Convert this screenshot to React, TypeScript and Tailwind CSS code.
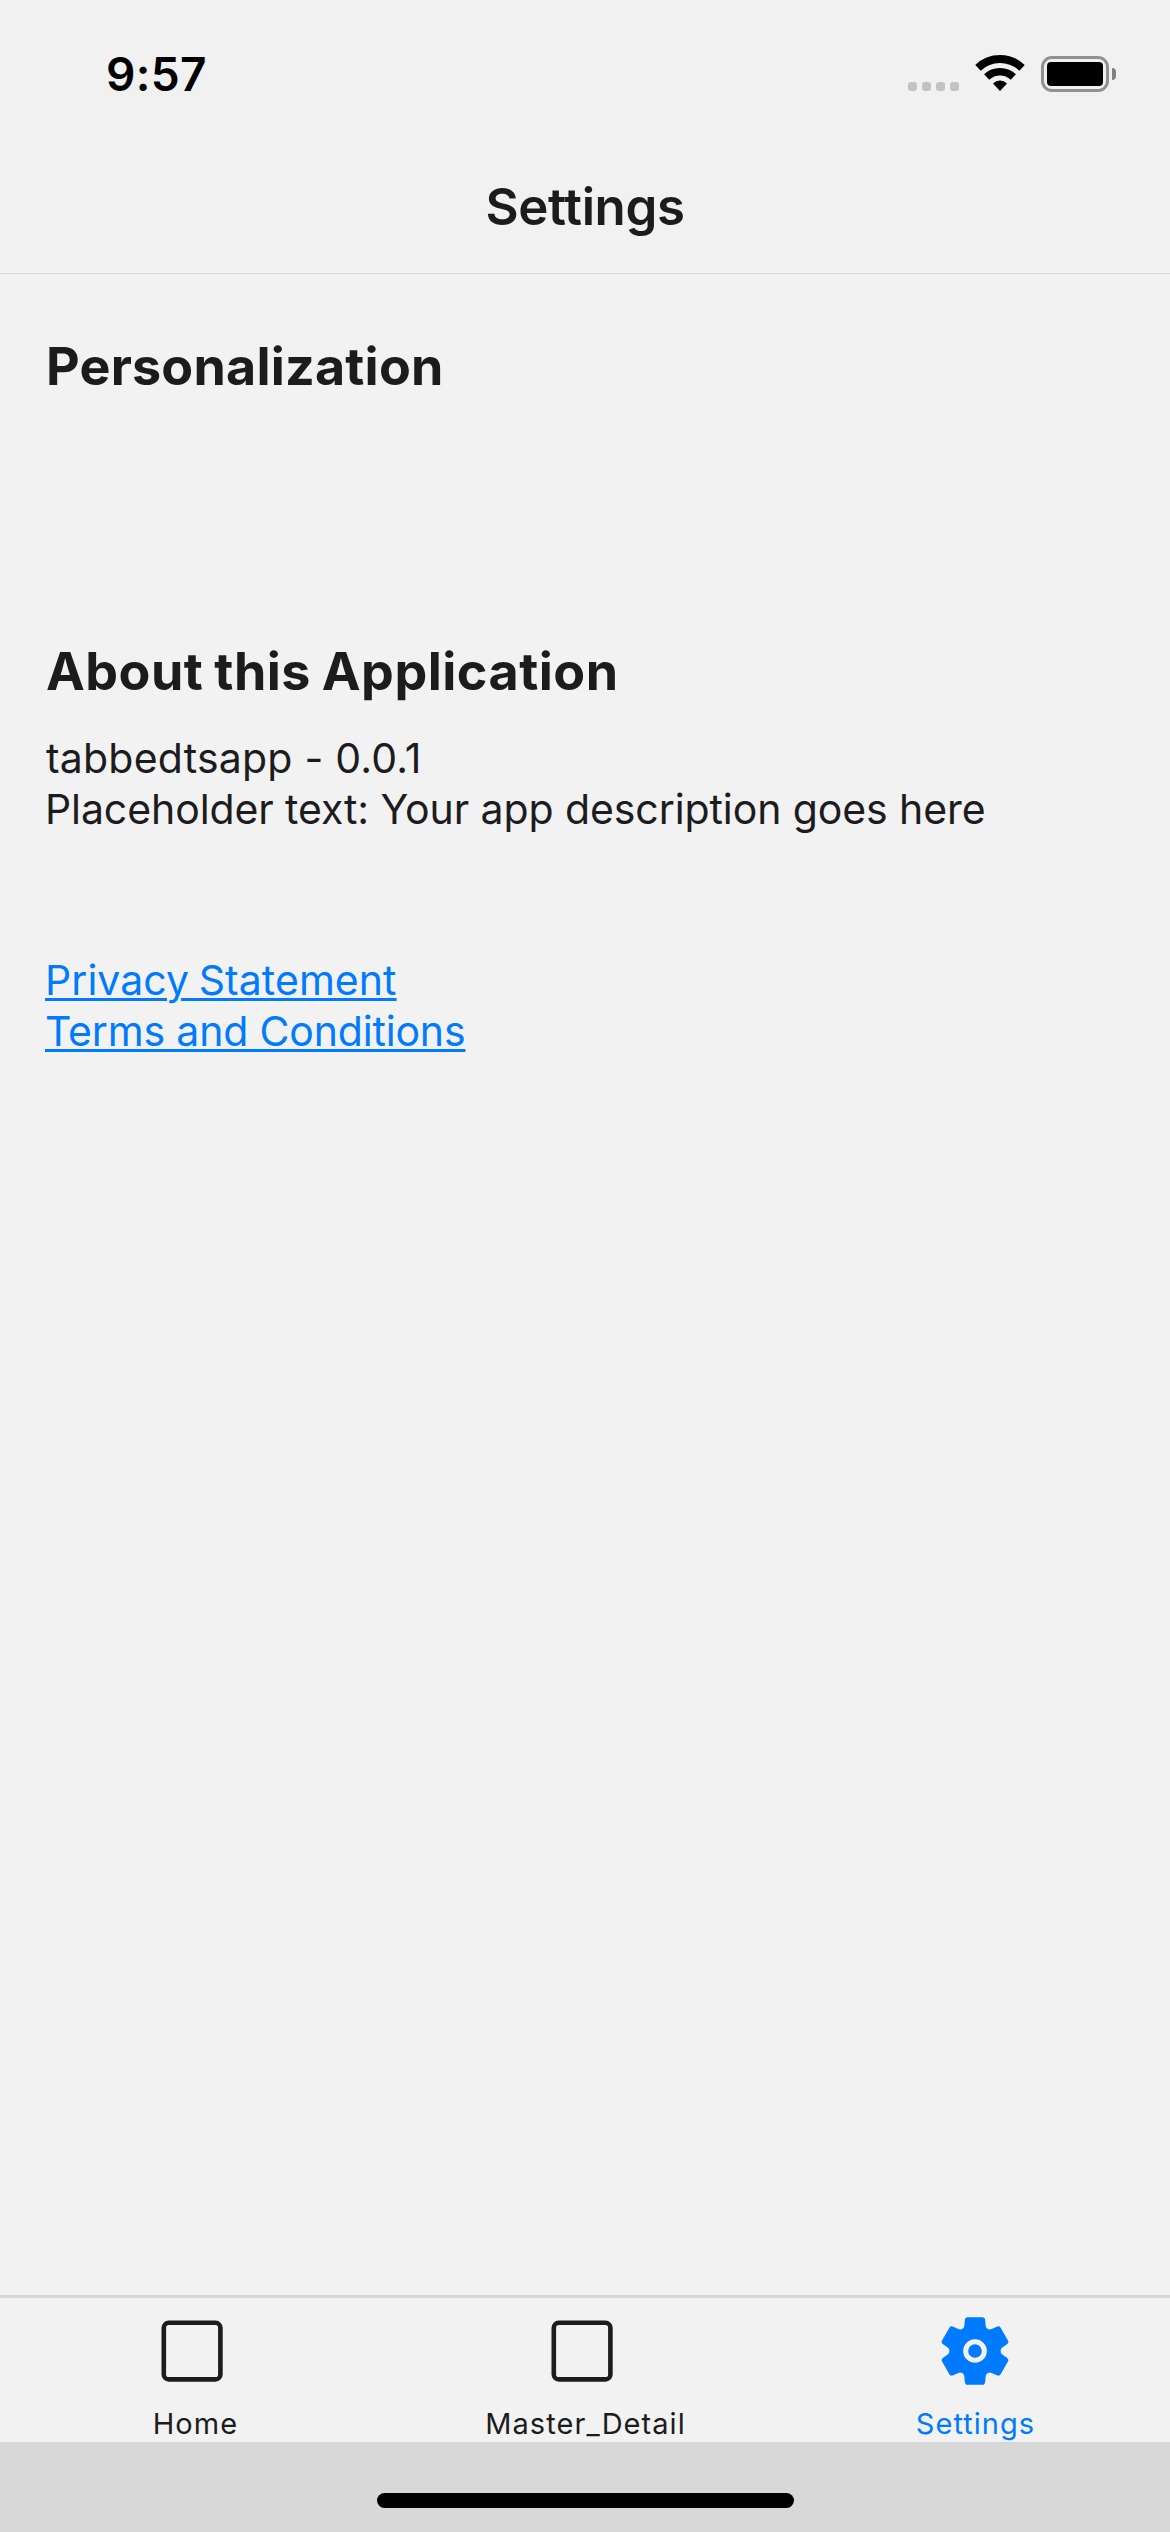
import type { ReactNode } from 'react';

function StatusBar() {
  return (
    <div className="flex h-[141px] items-start justify-between pr-[54px] pl-[106px] text-black">
      <span className="mt-[44px] text-[46px] leading-[60px] font-semibold tracking-[0.3px]">9:57</span>
      <div className="mt-[55px] flex items-start">
        <div className="mt-[27px] flex gap-[5px]">
          <i className="size-[9px] rounded-[3px] bg-[#c3c3c3]" />
          <i className="size-[9px] rounded-[3px] bg-[#c3c3c3]" />
          <i className="size-[9px] rounded-[3px] bg-[#c3c3c3]" />
          <i className="size-[9px] rounded-[3px] bg-[#c3c3c3]" />
        </div>
        <svg className="ml-[16px]" width="50" height="37" viewBox="-25 -36 50 37" fill="none" stroke="#000">
          <path d="M-22 -23.2A32 32 0 0 1 22 -23.2" strokeWidth="8" />
          <path d="M-13.3 -14A19.3 19.3 0 0 1 13.3 -14" strokeWidth="7.6" />
          <path d="M0 0L-7 -7.4Q-4 -10.4 0 -10.4T7 -7.4Z" fill="#000" stroke="none" />
        </svg>
        <div className="mt-px ml-[16px] flex items-center">
          <div className="h-[36px] w-[68px] rounded-[11px] border-3 border-[#919191] p-[3px]">
            <div className="h-full w-full rounded-[4px] bg-black" />
          </div>
          <div className="ml-[3px] h-[12px] w-[4px] rounded-r-full bg-[#808080]" />
        </div>
      </div>
    </div>
  );
}

function SquareIcon() {
  return (
    <svg width="68" height="68" viewBox="-34 -34 68 68" fill="none">
      <rect x="-28.2" y="-28.2" width="56.6" height="56.6" rx="5" stroke="#1c1c1e" strokeWidth="4.6" />
    </svg>
  );
}

const TOOTH =
  'M0 0L-38.2 -66.3Q-33 -69 -32 -76L-30.5 -93Q-29.5 -101.5 -22 -101.5H22Q29.5 -101.5 30.5 -93L32 -76Q33 -69 38.2 -66.3Z';

function GearIcon() {
  return (
    <svg width="68" height="68" viewBox="-102 -102 204 204">
      <g fill="#007aff">
        {[0, 60, 120, 180, 240, 300].map((angle) => (
          <path key={angle} d={TOOTH} transform={`rotate(${angle})`} />
        ))}
        <circle r="76" />
      </g>
      <circle r="28" fill="none" stroke="#f2f2f2" strokeWidth="15" />
    </svg>
  );
}

function Tab({ label, active, children }: { label: ReactNode; active?: boolean; children: ReactNode }) {
  return (
    <div className={active ? 'flex flex-1 flex-col items-center text-[#007aff]' : 'flex flex-1 flex-col items-center'}>
      <div className={active ? 'mt-[19px] h-[68px] pr-px' : 'mt-[19px] h-[68px] pr-[6px]'}>{children}</div>
      <span className="mt-[21px] pl-px text-[29px] leading-[36px] tracking-[1.05px]">{label}</span>
    </div>
  );
}

export default function App() {
  return (
    <div className="flex h-[2532px] w-[1170px] flex-col bg-[#f2f2f2] font-['Inter',sans-serif] text-[#1c1c1e]">
      <header className="h-[274px] border-b border-[#d8d8d8] bg-[#f1f1f1]">
        <StatusBar />
        <h1 className="mt-[36px] text-center text-[51px] leading-[60px] font-semibold tracking-[-0.4px]">Settings</h1>
      </header>

      <main className="flex flex-1 flex-col items-start px-[45px] pt-[63px] text-[41px] leading-[51px]">
        <h2 className="pl-px text-[52px] leading-[60px] font-bold tracking-[0.2px]">Personalization</h2>
        <h2 className="mt-[245px] pl-px text-[52px] leading-[60px] font-bold tracking-[0.5px] [word-spacing:-2px]">
          About this Application
        </h2>
        <p className="mt-[31px] pl-px tracking-[0.21px]">tabbedtsapp - 0.0.1</p>
        <p className="tracking-[-0.09px]">Placeholder text: Your app description goes here</p>
        <a className="mt-[120px] tracking-[0.06px] text-[#007aff] underline decoration-[3px] underline-offset-[3px] [word-spacing:-2px]">
          Privacy Statement
        </a>
        <a className="tracking-[-0.17px] text-[#007aff] underline decoration-[3px] underline-offset-[3px]">
          Terms and Conditions
        </a>
      </main>

      <nav className="flex h-[147px] border-t-3 border-[#d8d8d8]">
        <Tab label="Home">
          <SquareIcon />
        </Tab>
        <Tab label="Master_Detail">
          <SquareIcon />
        </Tab>
        <Tab label="Settings" active>
          <GearIcon />
        </Tab>
      </nav>
      <div className="flex h-[90px] justify-center bg-[#d8d8d8] pt-[51px]">
        <div className="h-[15px] w-[417px] rounded-full bg-black" />
      </div>
    </div>
  );
}
